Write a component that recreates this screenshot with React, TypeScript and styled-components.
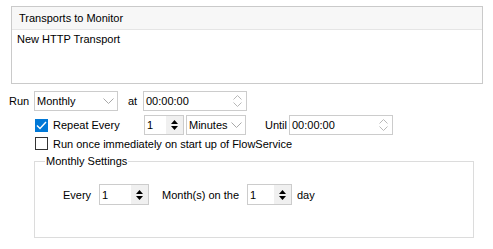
import React from "react";
import styled, { createGlobalStyle } from "styled-components";

const Global = createGlobalStyle`
  html, body { margin: 0; padding: 0; background: #ffffff; }
  body { font-family: "Liberation Sans", Arial, sans-serif; font-size: 11px; color: #000; }
  * { box-sizing: border-box; }
`;

const Page = styled.div`
  width: 493px;
  height: 249px;
  padding: 6px 0 0 0;
  display: flex;
  flex-direction: column;
`;

const ListBox = styled.div`
  margin-left: 11px;
  width: 472px;
  height: 78px;
  border: 1px solid #cacaca;
  background: #fff;
  display: flex;
  flex-direction: column;
`;

const ListHeader = styled.div`
  height: 23px;
  background: #f7f7f7;
  border-bottom: 1px solid #e5e5e5;
  display: flex;
  align-items: center;
  padding-left: 7px;
`;

const ListItem = styled.div`
  height: 18px;
  display: flex;
  align-items: center;
  padding-left: 5px;
`;

const Row = styled.div<{ $top: number; $left: number; $h?: number }>`
  display: flex;
  align-items: center;
  margin-top: ${(p) => p.$top}px;
  padding-left: ${(p) => p.$left}px;
  height: ${(p) => p.$h ?? 20}px;
`;

const Label = styled.span<{ $w?: number; $ml?: number }>`
  white-space: nowrap;
  margin-left: ${(p) => p.$ml ?? 0}px;
  ${(p) => (p.$w ? `width: ${p.$w}px;` : "")}
  flex: none;
`;

const Field = styled.div<{ $w: number; $ml?: number; $h?: number }>`
  flex: none;
  width: ${(p) => p.$w}px;
  height: ${(p) => p.$h ?? 20}px;
  margin-left: ${(p) => p.$ml ?? 0}px;
  border: 1px solid #cccccc;
  background: #fff;
  display: flex;
  align-items: stretch;
`;

const FieldText = styled.span`
  flex: 1;
  display: flex;
  align-items: center;
  padding-left: 2px;
  white-space: nowrap;
  overflow: hidden;
`;

const ChevronBox = styled.span`
  width: 17px;
  display: flex;
  align-items: center;
  justify-content: center;
`;

const SpinBox = styled.span<{ $bg: string }>`
  width: 17px;
  background: ${(p) => p.$bg};
  display: flex;
  flex-direction: column;
  align-items: center;
  justify-content: center;
  gap: 2px;
`;

const CheckBox = styled.span<{ $checked?: boolean }>`
  flex: none;
  width: 13px;
  height: 13px;
  border: 1px solid ${(p) => (p.$checked ? "#0078d7" : "#333333")};
  background: ${(p) => (p.$checked ? "#0078d7" : "#ffffff")};
  display: flex;
  align-items: center;
  justify-content: center;
  margin-right: 5px;
`;

const GroupBox = styled.fieldset`
  margin: 4px 0 0 34px;
  width: 440px;
  height: 83px;
  padding: 0;
  border: 1px solid #dcdcdc;
  min-width: 0;
`;

const Legend = styled.legend`
  margin-left: 10px;
  padding: 0 1px;
  line-height: 13px;
`;

const ChevronDown = () => (
  <svg width="11" height="6" viewBox="0 0 11 6">
    <path d="M0.5 0.5 L5.5 5.5 L10.5 0.5" fill="none" stroke="#a8a8a8" strokeWidth="1" />
  </svg>
);

const TimeSpin = () => (
  <SpinBox $bg="#ffffff">
    <svg width="9" height="5" viewBox="0 0 9 5">
      <path d="M0.5 4.5 L4.5 0.5 L8.5 4.5" fill="none" stroke="#b8b8b8" strokeWidth="1" />
    </svg>
    <svg width="9" height="5" viewBox="0 0 9 5">
      <path d="M0.5 0.5 L4.5 4.5 L8.5 0.5" fill="none" stroke="#b8b8b8" strokeWidth="1" />
    </svg>
  </SpinBox>
);

const NumSpin = () => (
  <SpinBox $bg="#f0f0f0">
    <svg width="7" height="4" viewBox="0 0 7 4">
      <path d="M0 4 L3.5 0 L7 4 Z" fill="#000" />
    </svg>
    <svg width="7" height="4" viewBox="0 0 7 4">
      <path d="M0 0 L3.5 4 L7 0 Z" fill="#000" />
    </svg>
  </SpinBox>
);

const Combo = ({ value, w, ml }: { value: string; w: number; ml?: number }) => (
  <Field $w={w} $ml={ml}>
    <FieldText>{value}</FieldText>
    <ChevronBox>
      <ChevronDown />
    </ChevronBox>
  </Field>
);

const TimeField = ({ value, w, ml }: { value: string; w: number; ml?: number }) => (
  <Field $w={w} $ml={ml}>
    <FieldText>{value}</FieldText>
    <TimeSpin />
  </Field>
);

const NumField = ({ value, w, ml, h }: { value: string; w: number; ml?: number; h?: number }) => (
  <Field $w={w} $ml={ml} $h={h}>
    <FieldText>{value}</FieldText>
    <NumSpin />
  </Field>
);

const Check = () => (
  <svg width="11" height="9" viewBox="0 0 11 9">
    <path d="M1 4.5 L4 7.5 L10 1" fill="none" stroke="#fff" strokeWidth="1.4" />
  </svg>
);

export default function App() {
  return (
    <>
      <Global />
      <Page>
        <ListBox>
          <ListHeader>Transports to Monitor</ListHeader>
          <ListItem>New HTTP Transport</ListItem>
        </ListBox>

        <Row $top={7} $left={9}>
          <Label $w={25}>Run</Label>
          <Combo value="Monthly" w={84} />
          <Label $w={15} $ml={10}>at</Label>
          <TimeField value="00:00:00" w={104} ml={0} />
        </Row>

        <Row $top={4} $left={35}>
          <CheckBox $checked>
            <Check />
          </CheckBox>
          <Label $w={91}>Repeat Every</Label>
          <NumField value="1" w={40} />
          <Combo value="Minutes" w={60} ml={2} />
          <Label $ml={19} $w={24}>Until</Label>
          <TimeField value="00:00:00" w={104} />
        </Row>

        <Row $top={1} $left={35} $h={15}>
          <CheckBox />
          <Label>Run once immediately on start up of FlowService</Label>
        </Row>

        <GroupBox>
          <Legend>Monthly Settings</Legend>
          <Row $top={16} $left={28} $h={21}>
            <Label $w={36}>Every</Label>
            <NumField value="1" w={50} h={21} />
            <Label $ml={13} $w={85}>Month(s) on the</Label>
            <NumField value="1" w={45} h={21} />
            <Label $ml={5}>day</Label>
          </Row>
        </GroupBox>
      </Page>
    </>
  );
}
